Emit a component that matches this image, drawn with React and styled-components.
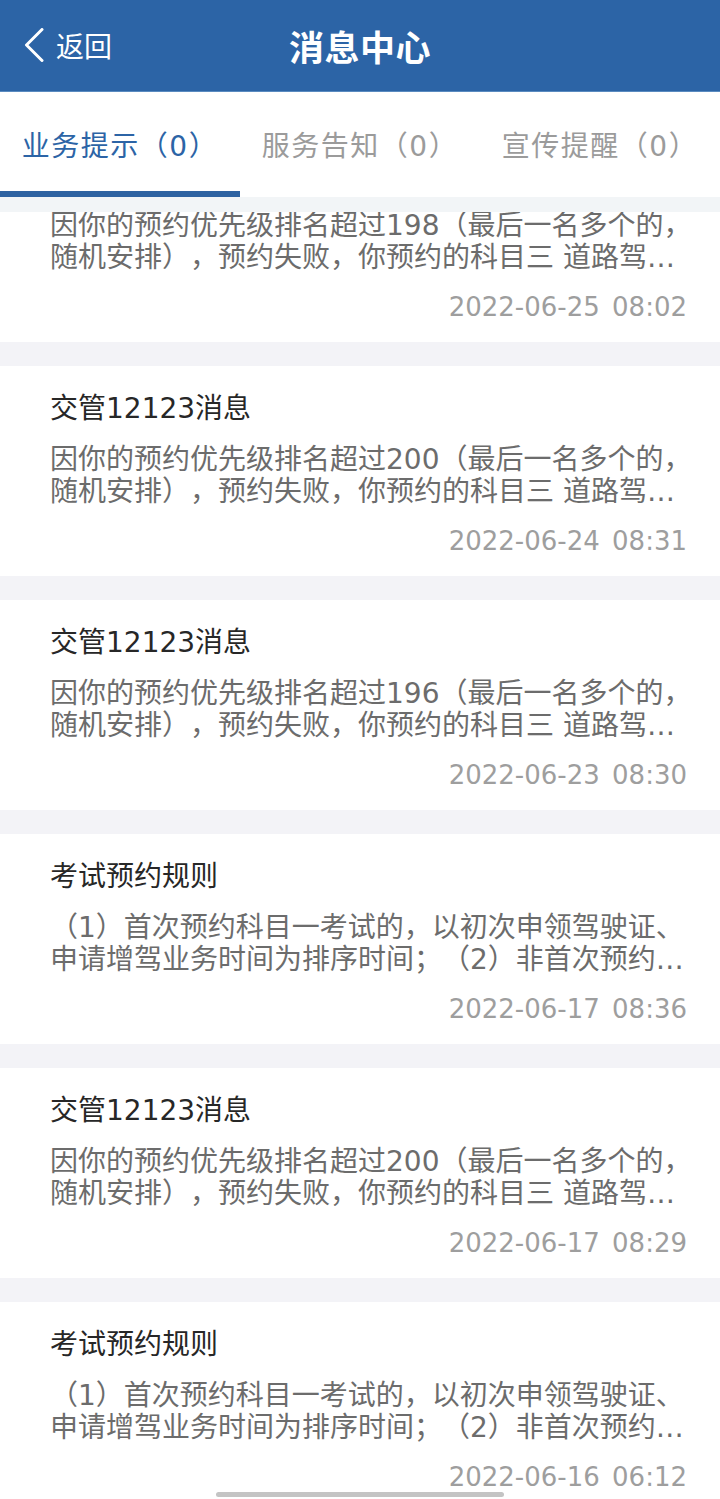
import React, { useLayoutEffect, useRef } from 'react';
import styled, { createGlobalStyle } from 'styled-components';

const GlobalStyle = createGlobalStyle`
  html, body {
    margin: 0;
    padding: 0;
    height: 100%;
    overflow: hidden;
    background: #f3f3f7;
  }
  #root { height: 100%; }
  * { box-sizing: border-box; }
`;

const FONT = `"DejaVu Sans", "Noto Sans CJK SC", sans-serif`;

const Screen = styled.div`
  position: relative;
  height: 100vh;
  display: flex;
  flex-direction: column;
  font-family: ${FONT};
  text-spacing-trim: space-all;
  background: #f3f3f7;
`;

const NavBar = styled.header`
  flex: none;
  height: 92px;
  display: grid;
  grid-template-columns: 1fr auto 1fr;
  align-items: center;
  background: #2c64a6;
  border-bottom: 1px solid #5a8bc0;
  color: #fff;
`;

const BackButton = styled.div`
  display: flex;
  align-items: center;
  gap: 12px;
  padding-left: 24px;
  padding-bottom: 2px;
  font-size: 28px;
  line-height: 40px;
  font-family: "Noto Sans CJK SC", sans-serif;
`;

const NavTitle = styled.h1`
  margin: 0;
  font-size: 35px;
  line-height: 46px;
  font-weight: 700;
  font-family: "Noto Sans CJK SC", sans-serif;
  letter-spacing: 0.5px;
`;

const TabBar = styled.nav`
  flex: none;
  display: grid;
  grid-template-columns: repeat(3, 1fr);
  background: #fff;
`;

const Tab = styled.div`
  position: relative;
  height: 105px;
  padding-top: 5px;
  display: flex;
  align-items: center;
  justify-content: center;
  font-size: 28px;
  line-height: 40px;
  letter-spacing: 1.5px;
  white-space: nowrap;
  color: ${(p) => (p.$active ? '#2c64a6' : '#9b9b9b')};

  &::after {
    content: '';
    display: ${(p) => (p.$active ? 'block' : 'none')};
    position: absolute;
    left: 0;
    right: 0;
    bottom: 0;
    height: 6px;
    background: #2e63a2;
  }
`;

const TabShade = styled.div`
  flex: none;
  height: 15px;
  background: #f2f5f7;
`;

const Viewport = styled.div`
  flex: 1;
  min-height: 0;
  overflow: hidden;
`;

const List = styled.div`
  display: flex;
  flex-direction: column;
  gap: 24px;
  padding-bottom: 24px;
  background: #f3f3f7;
`;

const Card = styled.article`
  height: 210px;
  padding: 23px 26px 17px 50px;
  background: #fff;
  display: flex;
  flex-direction: column;
`;

const CardTitle = styled.div`
  font-size: 28px;
  line-height: 40px;
  color: #272727;
  white-space: nowrap;
`;

const CardText = styled.div`
  margin-top: 15px;
  font-size: 28px;
  line-height: 32px;
  color: #6c6c6c;
  display: -webkit-box;
  -webkit-line-clamp: 2;
  -webkit-box-orient: vertical;
  overflow: hidden;
`;

const CardDate = styled.div`
  margin-top: 15px;
  padding-right: 7px;
  font-size: 26px;
  line-height: 36px;
  color: #9e9e9e;
  text-align: right;
  word-spacing: 4px;
`;

const HomeIndicator = styled.div`
  position: absolute;
  left: 50%;
  bottom: 2px;
  width: 288px;
  height: 5px;
  margin-left: -144px;
  border-radius: 3px;
  background: #c4c4c4;
`;

const notice = (n) =>
  `因你的预约优先级排名超过${n}（最后一名多个的，随机安排），预约失败，你预约的科目三 道路驾驶技能考试未能成功，请重新预约。`;
const rule =
  '（1）首次预约科目一考试的，以初次申领驾驶证、申请增驾业务时间为排序时间；（2）非首次预约科目一考试的，以上次考试时间为排序时间。';

const messages = [
  { title: '交管12123消息', text: notice(198), date: '2022-06-25 08:02' },
  { title: '交管12123消息', text: notice(200), date: '2022-06-24 08:31' },
  { title: '交管12123消息', text: notice(196), date: '2022-06-23 08:30' },
  { title: '考试预约规则', text: rule, date: '2022-06-17 08:36' },
  { title: '交管12123消息', text: notice(200), date: '2022-06-17 08:29' },
  { title: '考试预约规则', text: rule, date: '2022-06-16 06:12' },
  { title: '交管12123消息', text: notice(201), date: '2022-06-15 08:05' },
];

const tabs = ['业务提示（0）', '服务告知（0）', '宣传提醒（0）'];

function Chevron() {
  return (
    <svg width="20" height="34" viewBox="0 0 20 34" fill="none">
      <polyline
        points="18,1.5 2.5,17 18,32.5"
        stroke="#fff"
        strokeWidth="3"
        strokeLinecap="round"
        strokeLinejoin="round"
      />
    </svg>
  );
}

export default function App() {
  const viewportRef = useRef(null);

  useLayoutEffect(() => {
    if (viewportRef.current) viewportRef.current.scrollTop = 80;
  }, []);

  return (
    <>
      <GlobalStyle />
      <Screen>
        <NavBar>
          <BackButton>
            <Chevron />
            <span>返回</span>
          </BackButton>
          <NavTitle>消息中心</NavTitle>
          <div />
        </NavBar>
        <TabBar>
          {tabs.map((t, i) => (
            <Tab key={t} $active={i === 0}>
              {t}
            </Tab>
          ))}
        </TabBar>
        <TabShade />
        <Viewport ref={viewportRef}>
          <List>
            {messages.map((m, i) => (
              <Card key={i}>
                <CardTitle>{m.title}</CardTitle>
                <CardText>{m.text}</CardText>
                <CardDate>{m.date}</CardDate>
              </Card>
            ))}
          </List>
        </Viewport>
        <HomeIndicator />
      </Screen>
    </>
  );
}
